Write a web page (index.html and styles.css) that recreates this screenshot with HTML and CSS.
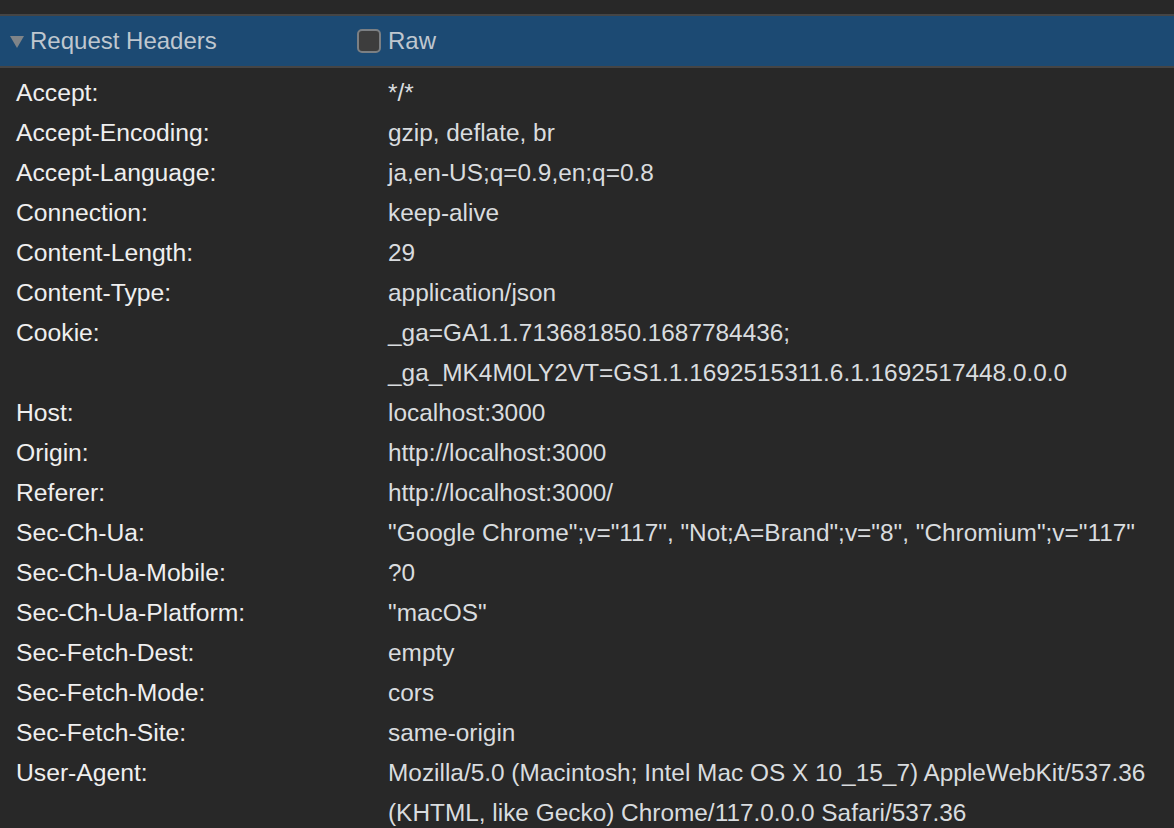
FILE: index.html
```html
<!DOCTYPE html>
<html>
<head>
<meta charset="utf-8">
<link rel="stylesheet" href="styles.css">
</head>
<body>
<div class="panel">
  <div class="section-head">
    <div class="title">
      <svg class="tri" width="14" height="12" viewBox="0 0 14 12"><polygon points="0,0 14,0 7,12" fill="#7f8488"/></svg>
      <span>Request Headers</span>
    </div>
    <label class="raw"><span class="box"></span><span>Raw</span></label>
  </div>
  <div class="rows">
    <div class="row"><div class="k">Accept:</div><div class="v">*/*</div></div>
    <div class="row"><div class="k">Accept-Encoding:</div><div class="v">gzip, deflate, br</div></div>
    <div class="row"><div class="k">Accept-Language:</div><div class="v">ja,en-US;q=0.9,en;q=0.8</div></div>
    <div class="row"><div class="k">Connection:</div><div class="v">keep-alive</div></div>
    <div class="row"><div class="k">Content-Length:</div><div class="v">29</div></div>
    <div class="row"><div class="k">Content-Type:</div><div class="v">application/json</div></div>
    <div class="row"><div class="k">Cookie:</div><div class="v">_ga=GA1.1.713681850.1687784436; _ga_MK4M0LY2VT=GS1.1.1692515311.6.1.1692517448.0.0.0</div></div>
    <div class="row"><div class="k">Host:</div><div class="v">localhost:3000</div></div>
    <div class="row"><div class="k">Origin:</div><div class="v">http://localhost:3000</div></div>
    <div class="row"><div class="k">Referer:</div><div class="v">http://localhost:3000/</div></div>
    <div class="row"><div class="k">Sec-Ch-Ua:</div><div class="v">"Google Chrome";v="117", "Not;A=Brand";v="8", "Chromium";v="117"</div></div>
    <div class="row"><div class="k">Sec-Ch-Ua-Mobile:</div><div class="v">?0</div></div>
    <div class="row"><div class="k">Sec-Ch-Ua-Platform:</div><div class="v">"macOS"</div></div>
    <div class="row"><div class="k">Sec-Fetch-Dest:</div><div class="v">empty</div></div>
    <div class="row"><div class="k">Sec-Fetch-Mode:</div><div class="v">cors</div></div>
    <div class="row"><div class="k">Sec-Fetch-Site:</div><div class="v">same-origin</div></div>
    <div class="row"><div class="k">User-Agent:</div><div class="v">Mozilla/5.0 (Macintosh; Intel Mac OS X 10_15_7) AppleWebKit/537.36 (KHTML, like Gecko) Chrome/117.0.0.0 Safari/537.36</div></div>
  </div>
</div>
</body>
</html>
```

FILE: styles.css
```css
html, body {
  margin: 0;
  padding: 0;
  background: #282828;
  height: 100%;
  overflow: hidden;
}
body {
  font-family: "Liberation Sans", Arial, Helvetica, sans-serif;
  font-size: 24px;
}
.panel {
  padding-top: 14px;
}
.section-head {
  display: flex;
  align-items: center;
  height: 50px;
  background: #1c4a73;
  border-top: 2px solid #454545;
  border-bottom: 2px solid #454545;
  color: #bfc7cf;
}
.title {
  display: flex;
  align-items: center;
  width: 357px;
  padding-left: 10px;
  box-sizing: border-box;
}
.tri {
  margin-right: 6px;
  margin-top: 1px;
}
.raw {
  display: flex;
  align-items: center;
  gap: 7px;
}
.box {
  width: 20px;
  height: 20px;
  border: 2px solid #7b7f83;
  border-radius: 5px;
  background: #3d3d3d;
}
.rows {
  padding-top: 5px;
}
.row {
  display: flex;
  line-height: 40px;
}
.k {
  width: 372px;
  padding-left: 16px;
  flex: none;
  color: #efefef;
  font-size: 24.7px;
}
.v {
  flex: 1;
  color: #d9dcdf;
  font-size: 24.4px;
}
```
